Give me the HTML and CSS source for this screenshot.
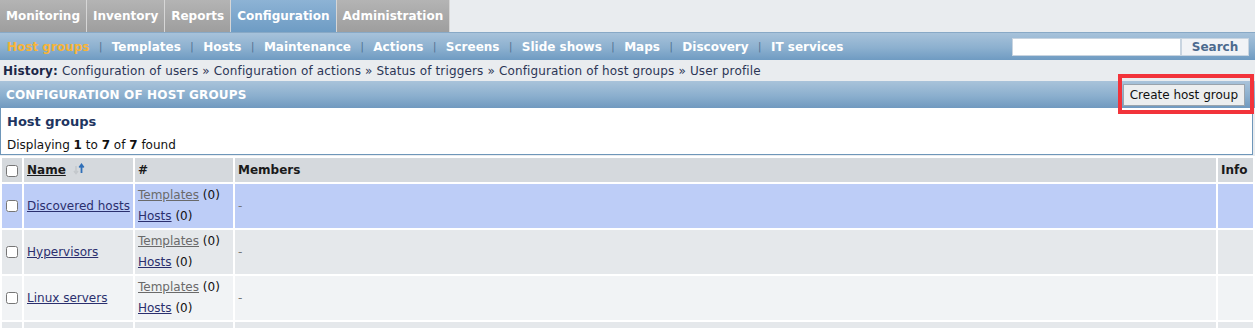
FILE: index.html
```html
<!DOCTYPE html>
<html lang="en">
<head>
    <meta charset="UTF-8">
    <title>Configuration of host groups</title>
    <link rel="stylesheet" href="styles.css">
</head>
<body>

<div class="topnav">
    <a class="tab" href="#">Monitoring</a>
    <a class="tab" href="#">Inventory</a>
    <a class="tab" href="#">Reports</a>
    <a class="tab active" href="#">Configuration</a>
    <a class="tab" href="#">Administration</a>
</div>

<div class="subnav">
    <div class="menu">
        <a class="current" href="#">Host groups</a><span class="sep">|</span>
        <a href="#">Templates</a><span class="sep">|</span>
        <a href="#">Hosts</a><span class="sep">|</span>
        <a href="#">Maintenance</a><span class="sep">|</span>
        <a href="#">Actions</a><span class="sep">|</span>
        <a href="#">Screens</a><span class="sep">|</span>
        <a href="#">Slide shows</a><span class="sep">|</span>
        <a href="#">Maps</a><span class="sep">|</span>
        <a href="#">Discovery</a><span class="sep">|</span>
        <a href="#">IT services</a>
    </div>
    <form class="search">
        <input type="text">
        <button type="button">Search</button>
    </form>
</div>

<div class="history">
    <b>History:</b>
    <a href="#">Configuration of users</a> &raquo;
    <a href="#">Configuration of actions</a> &raquo;
    <a href="#">Status of triggers</a> &raquo;
    <a href="#">Configuration of host groups</a> &raquo;
    <a href="#">User profile</a>
</div>

<div class="header">
    <span class="title">CONFIGURATION OF HOST GROUPS</span>
    <div class="create-wrap">
        <button class="create">Create host group</button>
        <div class="mark"></div>
    </div>
</div>

<div class="box">
    <div class="box-title">Host groups</div>
    <div class="box-info">Displaying <b>1</b> to <b>7</b> of <b>7</b> found</div>
</div>

<table class="list">
    <tr class="head">
        <td class="cb"><input type="checkbox"></td>
        <td class="name"><a href="#">Name</a>
            <svg class="sort" width="14" height="12" viewBox="0 0 14 12">
                <path d="M4 3v7M2 8l2 2.5L6 8" stroke="#c4c8cc" stroke-width="1.6" fill="none"/>
                <path d="M9.5 10V2M7.3 4.5L9.5 1.5l2.2 3" stroke="#2f6fb8" stroke-width="1.8" fill="none"/>
            </svg>
        </td>
        <td class="count">#</td>
        <td>Members</td>
        <td class="info">Info</td>
    </tr>
    <tr class="hl">
        <td class="cb"><input type="checkbox"></td>
        <td><a class="grp" href="#">Discovered hosts</a></td>
        <td><a class="tpl" href="#">Templates</a> (0)<br><a class="hst" href="#">Hosts</a> (0)</td>
        <td class="dash">-</td>
        <td></td>
    </tr>
    <tr class="even">
        <td class="cb"><input type="checkbox"></td>
        <td><a class="grp" href="#">Hypervisors</a></td>
        <td><a class="tpl" href="#">Templates</a> (0)<br><a class="hst" href="#">Hosts</a> (0)</td>
        <td class="dash">-</td>
        <td></td>
    </tr>
    <tr class="odd">
        <td class="cb"><input type="checkbox"></td>
        <td><a class="grp" href="#">Linux servers</a></td>
        <td><a class="tpl" href="#">Templates</a> (0)<br><a class="hst" href="#">Hosts</a> (0)</td>
        <td class="dash">-</td>
        <td></td>
    </tr>
    <tr class="even">
        <td class="cb"></td>
        <td></td>
        <td></td>
        <td></td>
        <td></td>
    </tr>
</table>

</body>
</html>
```

FILE: styles.css
```css
body {
    margin: 0;
    font-family: "DejaVu Sans", Verdana, sans-serif;
    font-size: 12px;
    color: #111;
    background-color: #e9ecef;
    overflow: hidden;
}
a {
    text-decoration: none;
}

/* top tabs */
.topnav {
    display: flex;
    height: 32px;
    background-color: #e9ecef;
}
.tab {
    display: flex;
    align-items: center;
    padding: 0 6px;
    color: #ffffff;
    font-weight: bold;
    font-size: 12px;
    background: linear-gradient(#b4b4b4, #9e9e9e);
    border-right: 1px solid #d6d6d6;
}
.tab.active {
    background: linear-gradient(#8db3d5, #6e9cc4);
}

/* sub menu */
.subnav {
    display: flex;
    align-items: center;
    justify-content: space-between;
    height: 27px;
    border-top: 1px solid #88a9c6;
    background: linear-gradient(#a7c2da, #8cb0cf 55%, #6f9bc2);
}
.menu {
    padding-left: 7px;
    display: flex;
    align-items: center;
}
.menu a {
    color: #ffffff;
    font-weight: bold;
    font-size: 12px;
}
.menu a.current {
    color: #f7b437;
}
.sep {
    color: #4f6f8f;
    font-size: 10px;
    margin: 0 9.5px;
}
.search {
    display: flex;
    margin: 0 6px 0 0;
}
.search input {
    width: 163px;
    height: 14px;
    border: 1px solid #c8d4e0;
    padding: 1px 2px;
    margin: 0;
}
.search button {
    width: 68px;
    height: 18px;
    margin: 0;
    border: 1px solid #c8d4e0;
    background-color: #f1f3f6;
    color: #4c6a8e;
    font-family: inherit;
    font-weight: bold;
    font-size: 12px;
    padding: 0;
}

/* history */
.history {
    height: 20px;
    line-height: 22px;
    padding-left: 3px;
    color: #2c3656;
    font-size: 12px;
    letter-spacing: 0.15px;
}
.history b {
    color: #1b2848;
}
.history a {
    color: #2c3656;
}

/* section header */
.header {
    display: flex;
    align-items: center;
    justify-content: space-between;
    height: 27px;
    margin-top: 1px;
    background: linear-gradient(#a9c3da, #8bafce 55%, #7099bf);
}
.title {
    padding-left: 6px;
    color: #ffffff;
    font-weight: bold;
    font-size: 12px;
    letter-spacing: 0.15px;
}
.create-wrap {
    position: relative;
    margin-right: 10px;
}
.create {
    display: block;
    height: 22px;
    padding: 0 6px;
    border: 1px solid #9aa4ad;
    background-color: #eceeef;
    font-family: inherit;
    font-size: 12px;
    color: #111;
}
.mark {
    position: absolute;
    left: -5px;
    top: -10px;
    right: -9px;
    bottom: -8px;
    border: 4px solid #f2333a;
}

/* info box */
.box {
    height: 46px;
    margin-right: 2px;
    background-color: #ffffff;
    border: 1px solid #6e96b9;
    border-top: none;
}
.box-title {
    padding: 6px 0 0 6px;
    color: #1e3561;
    font-weight: bold;
    font-size: 13px;
}
.box-info {
    padding: 9px 0 0 6px;
    font-size: 12px;
}

/* list table */
.list {
    width: 1255px;
    margin-top: 1px;
    border-spacing: 2px;
    background-color: #ffffff;
    font-size: 12px;
}
.list td {
    padding: 0 3px;
}
.list .head td {
    height: 24px;
    background-color: #d5d9dd;
    font-weight: bold;
    color: #1a1a1a;
}
.list .head .name a {
    color: #1a1a1a;
    text-decoration: underline;
}
.sort {
    margin-left: 2px;
    vertical-align: -1px;
}
.list td.cb {
    width: 16px;
    padding: 0 0 0 4px;
}
.list td.cb input {
    margin: 0;
    width: 12px;
    height: 12px;
    vertical-align: middle;
}
.list td.name {
    width: 103px;
}
.list td.count {
    width: 92px;
}
.list td.info {
    width: 29px;
}
.list tr.hl td,
.list tr.even td,
.list tr.odd td {
    height: 44px;
    line-height: 21px;
}
.list tr.hl td {
    background-color: #bdcdf7;
}
.list tr.even td {
    background-color: #e5e8eb;
}
.list tr.odd td {
    background-color: #f1f3f5;
}
.grp {
    color: #2b2f6e;
    text-decoration: underline;
}
.tpl {
    color: #6a6a6a;
    text-decoration: underline;
}
.hst {
    color: #2b2f6e;
    text-decoration: underline;
}
.dash {
    color: #777;
}
```
